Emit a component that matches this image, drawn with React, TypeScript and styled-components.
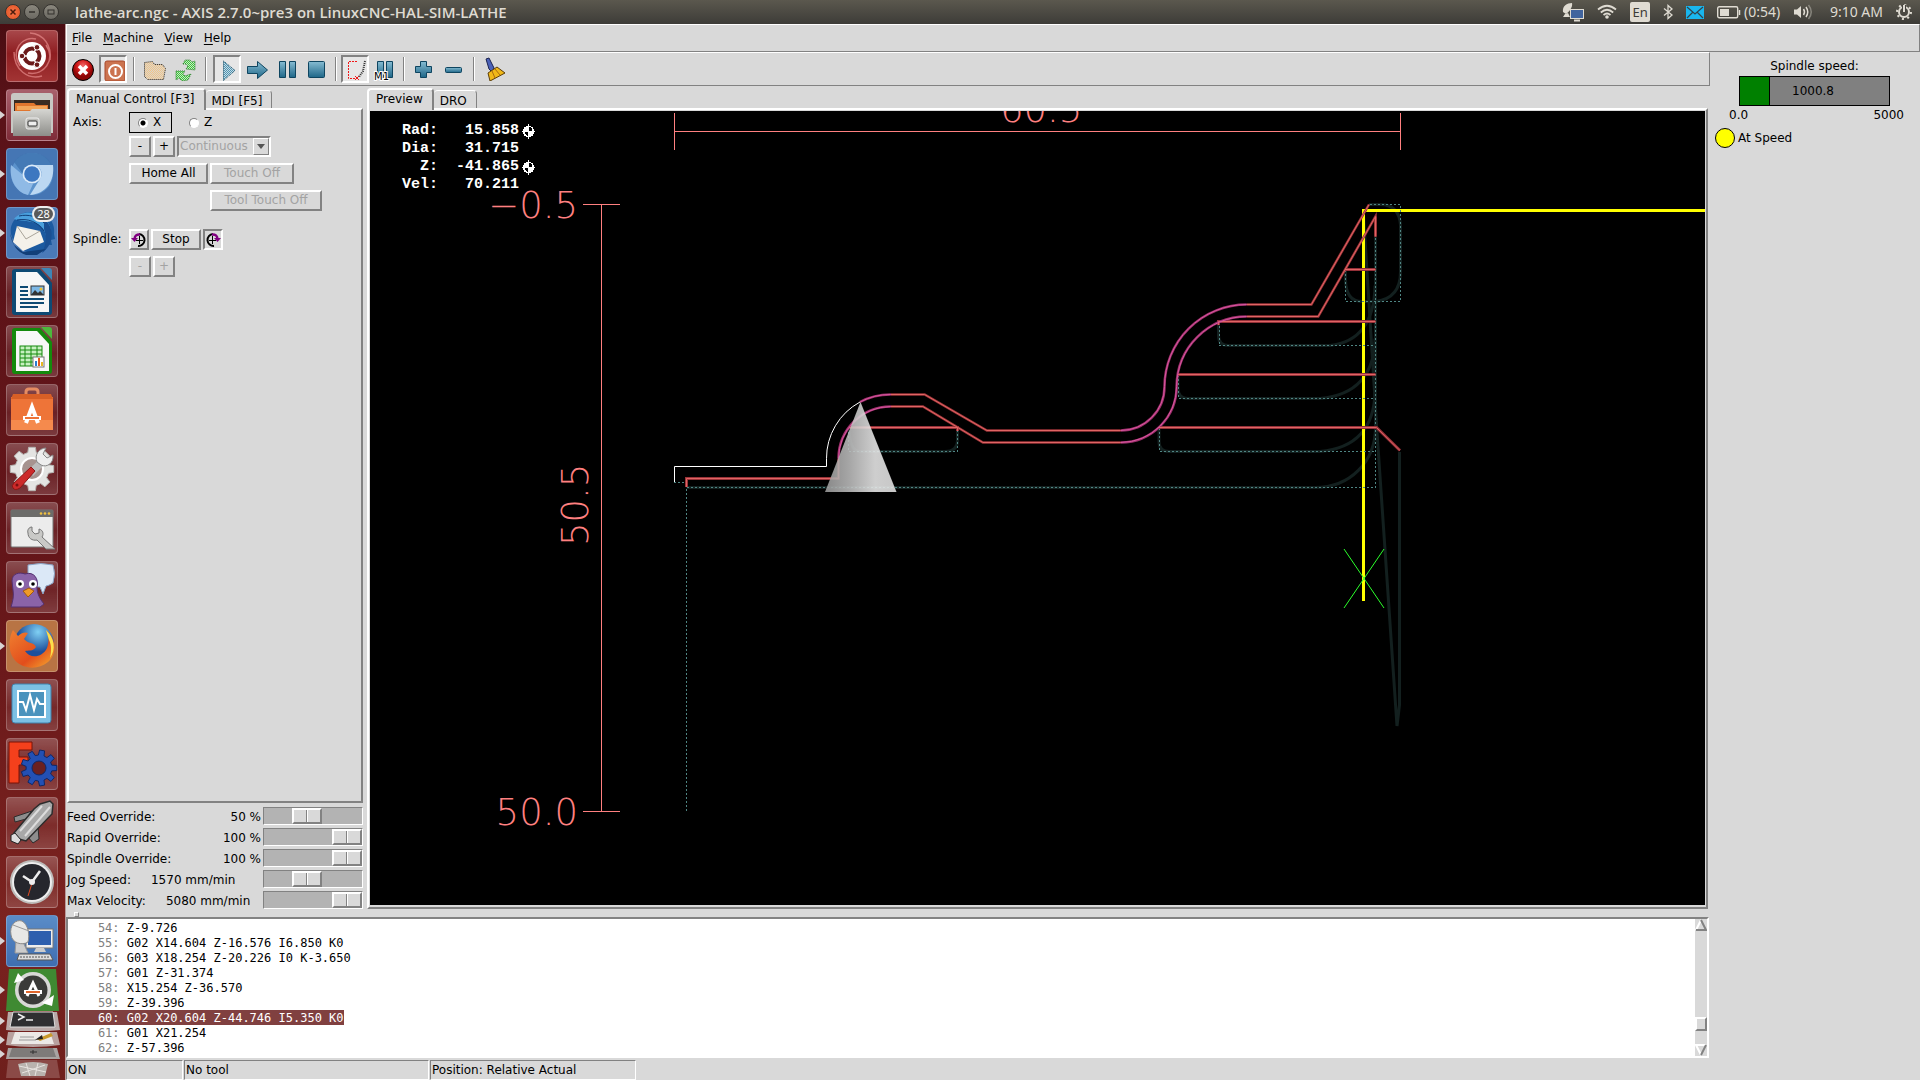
import React, { useState } from 'react';
import styled, { createGlobalStyle, css } from 'styled-components';

const GREY = '#d9d9d9';
const DARK = '#828282';
const UI_FONT = '"DejaVu Sans", Verdana, sans-serif';
const MONO_FONT = '"DejaVu Sans Mono", monospace';

const GlobalStyle = createGlobalStyle`
  *, *::before, *::after { box-sizing: border-box; }
  body { margin: 0; background: ${GREY}; color: #000; font: 12px/15px ${UI_FONT}; overflow: hidden; }
  button, input, select { font: inherit; color: inherit; margin: 0; padding: 0; }
  ul, ol { list-style: none; margin: 0; padding: 0; }
  svg { display: block; }
`;

const raised = css`
  border: 2px solid;
  border-color: #fff ${DARK} ${DARK} #fff;
`;
const sunken = css`
  border: 2px solid;
  border-color: ${DARK} #fff #fff ${DARK};
`;

/* ---------- desktop ---------- */

const Desktop = styled.div`
  display: flex;
  flex-direction: column;
  height: 100vh;
`;

const TopBar = styled.header`
  display: flex;
  align-items: center;
  flex: none;
  height: 24px;
  padding: 0 8px 0 5px;
  background: linear-gradient(#5b584e, #3d3c38);
  color: #dfdbd2;
  font: 14px/22px "Noto Sans", "Open Sans", sans-serif;
`;

const WindowButtons = styled.div`
  display: flex;
  gap: 3px;
  margin-right: 16px;
`;

const WindowButton = styled.button<{ $close?: boolean }>`
  width: 16px;
  height: 16px;
  border: 1px solid #35332f;
  border-radius: 50%;
  background: ${(p) => (p.$close ? 'radial-gradient(#f4764b, #e2501f)' : 'linear-gradient(#8a877d, #6b6962)')};
`;

const Title = styled.h1`
  flex: 1;
  margin: 0;
  font-family: "Open Sans", "Noto Sans", sans-serif;
  font-size: 15px;
  font-weight: 600;
`;

const Tray = styled.div`
  display: flex;
  align-items: center;
  gap: 13px;
`;

const TrayItem = styled.button`
  display: flex;
  align-items: center;
  gap: 3px;
  border: 0;
  background: none;
`;

const Language = styled.span`
  width: 20px;
  height: 20px;
  border-radius: 2px;
  background: #dfdbd2;
  color: #3c3b37;
  font-size: 13px;
  line-height: 20px;
  text-align: center;
`;

const Below = styled.div`
  display: flex;
  flex: 1;
  min-height: 0;
`;

/* ---------- launcher ---------- */

const Launcher = styled.nav`
  flex: none;
  width: 66px;
  overflow: hidden;
  padding-top: 6px;
  border-right: 1px solid #b89a9a;
  background: linear-gradient(#4a0d12, #5a1218 8%, #641519 50%, #7b231f 85%, #6e1f1c);
`;

const TileList = styled.ul`
  display: flex;
  flex-direction: column;
  gap: 7px;
`;

const FoldedList = styled.ul`
  padding-top: 2px;
`;

const TileSlot = styled.li<{ $running?: boolean }>`
  display: flex;
  align-items: center;
  &::before {
    content: '';
    width: 6px;
    border: 4px solid transparent;
    border-left: 5px solid ${(p) => (p.$running ? '#d8d4d4' : 'transparent')};
    border-right: 0;
    flex: none;
  }
`;

const Tile = styled.button<{ $tint?: string }>`
  position: relative;
  width: 52px;
  height: 52px;
  border: 1px solid rgba(255, 255, 255, 0.22);
  border-radius: 4px;
  background: ${(p) => p.$tint ?? 'linear-gradient(rgba(255,255,255,.24), rgba(255,255,255,.06) 55%, rgba(255,255,255,.16))'};
  svg { margin: -1px; }
`;

const Badge = styled.span`
  position: absolute;
  top: -2px;
  right: 2px;
  width: 23px;
  height: 16px;
  border: 2px solid #eee;
  border-radius: 8px;
  background: #5a5a5a;
  color: #fff;
  font: 11px/12px "Noto Sans", sans-serif;
  text-align: center;
`;

/* ---------- application window ---------- */

const Window = styled.main`
  display: flex;
  flex-direction: column;
  flex: 1;
  min-width: 0;
  background: ${GREY};
`;

const MenuBar = styled.nav`
  display: flex;
  align-items: center;
  flex: none;
  gap: 11px;
  height: 28px;
  padding: 0 5px;
  border: 1px solid;
  border-color: #fff ${DARK} ${DARK} #fff;
`;

const MenuButton = styled.button`
  border: 0;
  background: none;
  line-height: 16px;
  u { text-underline-offset: 2px; }
`;

const Columns = styled.div`
  display: flex;
  flex: 1;
  min-height: 0;
`;

const MainColumn = styled.div`
  display: flex;
  flex-direction: column;
  flex: 1;
  min-width: 0;
`;

const ToolBar = styled.div`
  display: flex;
  flex: none;
  gap: 2px;
  height: 34px;
  padding: 2px;
  border: 1px solid;
  border-color: #fff ${DARK} ${DARK} #fff;
`;

const ToolButton = styled.button<{ $on?: boolean }>`
  width: 28px;
  height: 28px;
  background: ${GREY};
  ${(p) => (p.$on ? sunken : 'border: 2px solid transparent;')}
  ${(p) => p.$on && 'background: #e6e6e6;'}
`;

const ToolGap = styled.span<{ $wide?: boolean }>`
  display: flex;
  justify-content: center;
  width: ${(p) => (p.$wide ? 10 : 6)}px;
  padding: 2px 0;
  &::before {
    content: '';
    width: 2px;
    border-left: 1px solid ${DARK};
    border-right: 1px solid #fff;
  }
`;

const WorkArea = styled.div`
  display: flex;
  flex: 1;
  min-height: 0;
  gap: 4px;
  padding: 2px 2px 0 1px;
`;

const LeftPane = styled.section`
  display: flex;
  flex-direction: column;
  flex: none;
  width: 296px;
`;

const Notebook = styled.section`
  display: flex;
  flex-direction: column;
  flex: 1;
  min-width: 0;
  min-height: 0;
`;

const Tabs = styled.div`
  display: flex;
  align-items: flex-end;
  height: 20px;
`;

const Tab = styled.button<{ $active?: boolean }>`
  height: ${(p) => (p.$active ? 22 : 18)}px;
  margin-bottom: ${(p) => (p.$active ? -2 : 0)}px;
  padding: ${(p) => (p.$active ? '0 9px 2px 7px' : '3px 9px 0 6px')};
  border: solid;
  border-width: ${(p) => (p.$active ? '2px 2px 0 2px' : '1px 1px 0 0')};
  border-color: #fff ${DARK} transparent #fff;
  border-radius: 4px 4px 0 0;
  background: ${GREY};
  line-height: 14px;
  white-space: nowrap;
  z-index: ${(p) => (p.$active ? 1 : 0)};
`;

const ManualPage = styled.div`
  display: flex;
  flex-direction: column;
  flex: 1;
  gap: 6px;
  padding: 2px 4px;
  ${raised}
`;

const ControlRow = styled.div<{ $spaced?: boolean; $tight?: boolean }>`
  display: grid;
  grid-template-columns: 56px 1fr;
  align-items: center;
  min-height: 21px;
  margin-top: ${(p) => (p.$spaced ? 12 : 0)}px;
  margin-bottom: ${(p) => (p.$tight ? -3 : 0)}px;
`;

const Controls = styled.div<{ $indent?: boolean }>`
  display: flex;
  align-items: center;
  gap: 2px;
  padding-left: ${(p) => (p.$indent ? 81 : 0)}px;
`;

const AxisChoice = styled.label<{ $focus?: boolean }>`
  display: flex;
  align-items: center;
  gap: 5px;
  width: 43px;
  height: 21px;
  margin-right: 6px;
  padding-left: 8px;
  border: 1px solid ${(p) => (p.$focus ? '#000' : 'transparent')};
`;

const Radio = styled.input`
  appearance: none;
  width: 10px;
  height: 10px;
  border: 1px solid;
  border-color: ${DARK} #fff #fff ${DARK};
  border-radius: 50%;
  background: #fff;
  &:checked { background: radial-gradient(#000 0 2px, #fff 3px); }
`;

const PushButton = styled.button<{ $w: number; $down?: boolean }>`
  display: flex;
  align-items: center;
  justify-content: center;
  width: ${(p) => p.$w}px;
  height: 21px;
  background: ${GREY};
  ${(p) => (p.$down ? sunken : raised)}
  &:disabled { color: #a3a3a3; }
`;

const Combo = styled.span`
  position: relative;
  width: 94px;
  height: 21px;
  ${sunken}
`;

const ComboSelect = styled.select`
  appearance: none;
  width: 100%;
  height: 17px;
  padding-left: 1px;
  border: 0;
  background: transparent;
  line-height: 15px;
  &:disabled { color: #a3a3a3; opacity: 1; }
`;

const ComboArrow = styled.span`
  position: absolute;
  top: 0;
  right: 0;
  width: 16px;
  height: 17px;
  padding: 5px 3px;
  border: 1px solid;
  border-color: #fff ${DARK} ${DARK} #fff;
  pointer-events: none;
`;

const Overrides = styled.div`
  display: flex;
  flex-direction: column;
  gap: 3px;
  padding-top: 4px;
`;

const OverrideRow = styled.div`
  display: flex;
  align-items: center;
  height: 18px;
  line-height: 16px;
`;

const OverrideLabel = styled.label`
  padding-top: 2px;
`;

const Amount = styled.output<{ $unit?: boolean }>`
  margin: ${(p) => (p.$unit ? '0 auto 0 20px' : '0 2px 0 auto')};
  padding-top: 2px;
`;

const Slider = styled.input`
  appearance: none;
  width: 100px;
  height: 18px;
  border: 1px solid;
  border-color: ${DARK} #fff #fff ${DARK};
  background: #b3b3b3;
  &::-webkit-slider-thumb {
    appearance: none;
    width: 30px;
    height: 16px;
    ${raised}
    background: linear-gradient(90deg, ${GREY} 12px, ${DARK} 12px 13px, #fff 13px 14px, ${GREY} 14px);
  }
`;

/* ---------- preview ---------- */

const Canvas = styled.div`
  position: relative;
  flex: 1;
  min-height: 0;
  padding: 1px 1px 2px;
  ${raised}
`;

const Plot = styled.svg`
  width: 100%;
  height: 100%;
  background: #000;
`;

const Readout = styled.div`
  position: absolute;
  top: 12px;
  left: 33px;
  color: #fff;
  font: bold 15px/18px "Liberation Mono", monospace;
  white-space: pre;
`;

const ReadoutLine = styled.div`
  display: flex;
  align-items: center;
  gap: 2px;
  height: 18px;
`;

/* ---------- program listing ---------- */

const Sash = styled.div`
  flex: none;
  height: 8px;
  padding: 3px 8px;
  &::before {
    content: '';
    display: block;
    width: 5px;
    height: 5px;
    border: 1px solid;
    border-color: #fff ${DARK} ${DARK} #fff;
  }
`;

const Program = styled.section`
  display: flex;
  flex: none;
  height: 141px;
  margin-right: 1px;
  background: #fff;
  ${sunken}
`;

const Listing = styled.ol`
  flex: 1;
  padding: 1px;
  font: 12px/15px ${MONO_FONT};
  white-space: pre;
`;

const CodeLine = styled.li<{ $current?: boolean }>`
  width: max-content;
  height: 15px;
  line-height: 16px;
  ${(p) => p.$current && 'background: #804040; color: #fff;'}
`;

const LineNo = styled.span<{ $current?: boolean }>`
  color: ${(p) => (p.$current ? '#fff' : '#808080')};
`;

const ScrollBar = styled.div`
  display: flex;
  flex-direction: column;
  width: 12px;
  background: ${GREY};
`;

const ScrollArrow = styled.button`
  height: 12px;
  border: 0;
  background: none;
`;

const Trough = styled.div`
  display: flex;
  flex-direction: column;
  justify-content: flex-end;
  flex: 1;
  padding-bottom: 13px;
`;

const ScrollThumb = styled.div`
  height: 14px;
  ${raised}
`;

const StatusBar = styled.footer`
  display: flex;
  flex: none;
  gap: 1px;
  height: 22px;
  padding-top: 2px;
`;

const StatusCell = styled.div<{ $w: number }>`
  width: ${(p) => p.$w}px;
  padding-left: 1px;
  line-height: 18px;
  border: 1px solid;
  border-color: ${DARK} #fff #fff ${DARK};
`;

/* ---------- side panel ---------- */

const SidePanel = styled.aside`
  display: flex;
  flex-direction: column;
  flex: none;
  width: 210px;
  padding-top: 6px;
`;

const SideLabel = styled.div`
  padding-right: 1px;
  line-height: 16px;
  text-align: center;
`;

const Gauge = styled.div`
  position: relative;
  height: 30px;
  margin: 2px 30px 0 29px;
  padding-right: 3px;
  border: 1px solid #000;
  background: #808080;
  line-height: 28px;
  text-align: center;
`;

const GaugeFill = styled.div`
  position: absolute;
  inset: 0 auto 0 0;
  border-right: 1px solid #000;
  background: #008000;
`;

const Scale = styled.div`
  display: flex;
  justify-content: space-between;
  padding: 2px 16px 0 19px;
`;

const Led = styled.div`
  display: flex;
  align-items: center;
  gap: 3px;
  margin: 5px 0 0 5px;
  &::before {
    content: '';
    width: 20px;
    height: 20px;
    border: 1px solid #000;
    border-radius: 50%;
    background: #ff0;
  }
`;

/* ---------- launcher art ---------- */

const Svg52 = ({ children }: { children: React.ReactNode }) => (
  <svg width="52" height="52" viewBox="0 0 52 52">{children}</svg>
);

const gearPath = (cx: number, cy: number, r: number, teeth: number, depth: number) => {
  const pts: string[] = [];
  for (let i = 0; i < teeth; i++) {
    const a = (i / teeth) * Math.PI * 2;
    const s = (Math.PI * 2) / teeth;
    [[-0.32, r - depth], [-0.2, r], [0.2, r], [0.32, r - depth]].forEach(([o, q]) => {
      pts.push(`${(cx + Math.cos(a + o * s) * q).toFixed(1)},${(cy + Math.sin(a + o * s) * q).toFixed(1)}`);
    });
  }
  return `M${pts.join('L')}Z`;
};

const Dash = () => (
  <Svg52>
    <g fill="none" stroke="#e58a8a" strokeWidth="1.5" opacity=".7">
      <path d="M14 36C4 20 16 6 30 9M40 15C50 30 38 46 22 43M24 3C38 4 46 16 44 30M8 22C8 40 22 50 36 46" />
    </g>
    <circle cx="26" cy="26" r="14" fill="#fff" />
    <circle cx="26" cy="26" r="7.5" fill="none" stroke="#6b1a1a" strokeWidth="4" />
    <g stroke="#fff" strokeWidth="1.5"><path d="M26 26L17 26M26 26L31 17M26 26L31 35" /></g>
    <circle cx="26" cy="26" r="5" fill="#fff" />
    <g fill="#6b1a1a" stroke="#fff"><circle cx="16" cy="26" r="2.8" /><circle cx="31" cy="17.3" r="2.8" /><circle cx="31" cy="34.7" r="2.8" /></g>
  </Svg52>
);

const Files = () => (
  <Svg52>
    <defs><linearGradient id="cab" x2="0" y2="1"><stop stopColor="#d6d6d2" /><stop offset="1" stopColor="#8d8d89" /></linearGradient></defs>
    <path d="M5 7Q5 4 8 4H44Q47 4 47 7V44H5Z" fill="#c8c8c4" />
    <rect x="8" y="11" width="36" height="14" fill="#3a2c22" />
    <path d="M9 14H28L30 16H42V25H9Z" fill="#e0762e" />
    <path d="M11 17H41V21H11Z" fill="#f2a65a" />
    <path d="M7 22H24L26 20H45V47H7Z" fill="url(#cab)" />
    <rect x="20" y="29" width="13" height="11" rx="2" fill="#bcbcb8" stroke="#efefef" />
    <rect x="22" y="32" width="9" height="5" rx="1" fill="#eee" stroke="#333" />
  </Svg52>
);

const Chromium = () => (
  <Svg52>
    <circle cx="26" cy="26" r="21" fill="#5b92cc" />
    <path d="M26 5A21 21 0 0 1 46 17H26A9 9 0 0 0 17 26L8 14A21 21 0 0 1 26 5Z" fill="#3f74b0" opacity=".8" />
    <path d="M5 17L17 27A10 10 0 0 0 27 36L22 47C9 44 3 30 5 17Z" fill="#8fbae6" />
    <path d="M28 17H47C49 33 40 46 24 47L34 31A9 9 0 0 0 28 17Z" fill="#bcd8f2" />
    <circle cx="26" cy="26" r="9.5" fill="#dcebf9" />
    <circle cx="26" cy="26" r="7.8" fill="#3d77c0" />
  </Svg52>
);

const Thunderbird = () => (
  <Svg52>
    <path d="M6 30C1 17 12 5 24 5C40 3 50 15 48 27L49 32L45 33L46 38L40 38L39 43C30 49 10 46 6 30Z" fill="#1c5aa0" />
    <path d="M8 12C14 4 30 3 38 11C46 17 47 30 41 38C41 24 36 17 26 15C18 13 12 14 8 12Z" fill="#4aa0dd" />
    <path d="M13 9C22 7 32 9 39 17M11 13C22 11 32 15 38 24" stroke="#123f78" fill="none" />
    <path d="M7 35L11 19L34 24L38 35L17 44Z" fill="#f4f1ea" />
    <path d="M11 19L20 32L34 24" stroke="#a9a49a" fill="none" />
    <path d="M38 12C49 20 48 38 36 46C40 38 41 30 38 22Z" fill="#1a4f92" />
    <path d="M4 26L8 38L17 45L40 42L31 48H20Q7 44 4 26Z" fill="#123f78" />
  </Svg52>
);

const Office = ({ dark, light, calc }: { dark: string; light: string; calc?: boolean }) => (
  <Svg52>
    <path d="M9 3H34L46 17V46Q46 49 43 49H9Q6 49 6 46V6Q6 3 9 3Z" fill={dark} />
    <path d="M35 2H43Q46 2 46 5V14Z" fill={light} />
    <path d="M10 6H31L43 19V46H10Z" fill="#f7f7f7" />
    {calc ? (
      <g>
        <rect x="14" y="21" width="22" height="20" fill="#c7f0c0" stroke={dark} />
        <path d="M14 25H36M14 29H36M14 33H36M14 37H36M19 21V41M25 21V41M31 21V41" stroke={dark} />
        <rect x="27" y="32" width="11" height="10" fill="#fff" stroke="#777" />
        <path d="M29 41V36H31V41Z" fill="#2b7bd0" /><path d="M32 41V33H34V41Z" fill="#e2571e" /><path d="M35 41V37H37V41Z" fill="#e8b820" />
      </g>
    ) : (
      <g>
        <path d="M14 21H22M14 25H22M14 29H22M14 33H38M14 37H38M14 41H32" stroke={dark} strokeWidth="2" />
        <rect x="25" y="20" width="13" height="9" fill="#7db8e6" stroke="#333" />
        <path d="M25 29L29 24L32 27L34 25L38 29Z" fill="#333" /><circle cx="35" cy="23" r="1.5" fill="#f4c430" />
      </g>
    )}
  </Svg52>
);

const Software = () => (
  <Svg52>
    <path d="M20 17V8Q20 5 23 5H29Q32 5 32 8V17" fill="none" stroke="#e58c62" strokeWidth="3" />
    <path d="M5 13H47V46H5Z" fill="#ee7438" />
    <path d="M5 36H47V46H5Z" fill="#f58a4d" />
    <path d="M7 10H45L47 15H5Z" fill="#d85f26" />
    <g fill="none" stroke="#fff" strokeWidth="4"><path d="M20 39L26 23L32 39" /></g>
    <path d="M17 32H35V36H17Z" fill="#fff" />
    <path d="M19 33H33V35H19Z" fill="#ee7438" />
  </Svg52>
);

const Settings = () => (
  <Svg52>
    <path d={gearPath(26, 26, 22, 8, 5)} fill="#e4e4e2" stroke="#b5b5b2" />
    <circle cx="26" cy="26" r="11" fill="#a6938f" stroke="#fff" strokeWidth="2" />
    <path d="M22 27L33 17L38 22L27 33Z" fill="#bbb" />
    <path d="M31 19C28 12 33 5 40 5L37 11L41 15L47 12C48 20 41 25 35 22Z" fill="#eee" stroke="#888" />
    <path d="M8 40L25 24L29 28L14 45Q9 48 7 45Q5 43 8 40Z" fill="#cc2a2a" stroke="#8c1616" />
    <circle cx="11" cy="42" r="1.5" fill="#7a1010" />
  </Svg52>
);

const Tweaks = () => (
  <Svg52>
    <rect x="5" y="8" width="42" height="37" rx="1" fill="#ececec" stroke="#777" />
    <path d="M5 8H47V15H5Z" fill="#6c6c6a" />
    <g fill="#f0c040"><circle cx="35" cy="11.5" r="1.3" /><circle cx="39" cy="11.5" r="1.3" /><circle cx="43" cy="11.5" r="1.3" /></g>
    <path d="M22 31C21 28 23 25 26 25V29L29 32L33 31V27C37 28 38 32 36 35L49 47H40L31 38C26 39 22 36 22 31Z" fill="#c9c9c7" stroke="#777" />
  </Svg52>
);

const Pidgin = () => (
  <Svg52>
    <path d="M22 4Q35 1 47 4Q50 12 47 22Q42 25 40 25L37 33L34 26Q26 26 22 24Z" fill="#dbe8f7" stroke="#8aa4c6" />
    <path d="M6 20C6 12 14 11 19 13C28 10 33 18 31 26C31 33 34 38 38 43L34 46H5C7 40 8 34 7 29Z" fill="#8a63a8" stroke="#533070" />
    <circle cx="14" cy="23" r="4" fill="#fff" /><circle cx="27" cy="23" r="4" fill="#fff" />
    <circle cx="14" cy="23" r="1.8" /><circle cx="27" cy="23" r="1.8" />
    <path d="M17 30L23 27L28 30L22 36Z" fill="#f09a28" stroke="#a35a10" />
  </Svg52>
);

const Firefox = () => (
  <Svg52>
    <defs>
      <radialGradient id="globe" cx=".6" cy=".2"><stop stopColor="#7fd0f4" /><stop offset="1" stopColor="#1d4f9c" /></radialGradient>
      <linearGradient id="fox" x2="1" y2="1"><stop stopColor="#f08030" /><stop offset=".6" stopColor="#e24e1c" /><stop offset="1" stopColor="#f8b030" /></linearGradient>
    </defs>
    <circle cx="28" cy="24" r="20" fill="url(#globe)" />
    <path d="M7 10L12 16C16 12 20 12 22 13L18 19C22 24 28 22 30 27C27 32 22 30 19 31C24 39 36 38 41 28C44 20 42 12 40 10C52 20 50 36 42 42C30 52 12 48 6 36C2 28 3 17 7 10Z" fill="url(#fox)" />
    <path d="M40 10C49 18 50 30 44 38C46 30 45 24 43 20Z" fill="#fbe04c" />
  </Svg52>
);

const Monitor = () => (
  <Svg52>
    <rect x="6" y="5" width="39" height="39" rx="3" fill="#7cc0e4" stroke="#3f83ad" />
    <rect x="12" y="12" width="27" height="26" fill="#4a93bd" stroke="#fff" strokeWidth="2" />
    <path d="M13 23H17L20 31L24 16L28 31L31 20L34 25H38" fill="none" stroke="#fff" strokeWidth="2" />
  </Svg52>
);

const FreeCad = () => (
  <Svg52>
    <path d="M3 4H26V12H13V19H22V27H13V45H3Z" fill="#f4401c" stroke="#7a1206" />
    <path d={gearPath(33, 30, 18, 9, 5)} fill="#2350b4" stroke="#0f2766" />
    <circle cx="33" cy="30" r="7" fill="#6b2020" stroke="#0f2766" />
  </Svg52>
);

const Mill = () => (
  <Svg52>
    <path d="M8 20L26 14L20 22L9 25ZM32 30L33 42L27 46L22 40Z" fill="#8d8d8d" stroke="#2c2c2c" />
    <path d="M34 7L44 4L47 7L46 17L20 44L13 42L8 36L28 12Z" fill="#a8a8a8" stroke="#2c2c2c" strokeWidth="1.5" />
    <path d="M36 9L14 34M44 10L19 39" stroke="#dcdcdc" strokeWidth="2" />
    <path d="M5 38L9 36L15 43L12 47L5 44Z" fill="#ddd" stroke="#222" />
  </Svg52>
);

const Clock = () => (
  <Svg52>
    <circle cx="26" cy="26" r="22" fill="#bdbdbb" />
    <circle cx="26" cy="26" r="20" fill="#eee" />
    <circle cx="26" cy="26" r="18" fill="#26272d" />
    <path d="M26 26L17 20M26 26L34 15" stroke="#eee" strokeWidth="2.5" />
    <path d="M27 24L22 40" stroke="#e04a20" />
    <circle cx="26" cy="26" r="3" fill="#eee" />
  </Svg52>
);

const Remote = () => (
  <Svg52>
    <rect x="20" y="14" width="27" height="19" fill="#eee" stroke="#777" />
    <rect x="22" y="16" width="23" height="14" fill="#2d5fae" />
    <path d="M30 33H38L40 37H28Z" fill="#ccc" />
    <path d="M10 26L9 38H22L17 27" stroke="#999" fill="#ccc" />
    <path d="M5 20C3 10 10 4 16 6C22 9 24 20 22 27C16 31 6 28 5 20Z" fill="#e8e8e6" stroke="#888" />
    <path d="M7 10L23 16" stroke="#999" fill="none" />
    <path d="M13 39H44L47 45H11Z" fill="#ddd" stroke="#555" /><path d="M14 42H44" stroke="#555" strokeDasharray="2 1" />
  </Svg52>
);

const launcherApps: { name: string; tint?: string; running?: boolean; badge?: string; art: React.ReactNode }[] = [
  { name: 'Dash', tint: 'linear-gradient(#a8474a, #8e1d20 45%, #a23434)', art: <Dash /> },
  { name: 'Files', tint: 'linear-gradient(#a8606c, #7e2b38)', running: true, art: <Files /> },
  { name: 'Chromium', tint: '#4576b4', running: true, art: <Chromium /> },
  { name: 'Thunderbird', tint: '#4a7ab8', running: true, badge: '28', art: <Thunderbird /> },
  { name: 'Writer', art: <Office dark="#0e4a74" light="#3e86b6" /> },
  { name: 'Calc', art: <Office dark="#148a0c" light="#4cb83c" calc /> },
  { name: 'Software', art: <Software /> },
  { name: 'Settings', art: <Settings /> },
  { name: 'Tweaks', art: <Tweaks /> },
  { name: 'Pidgin', art: <Pidgin /> },
  { name: 'Firefox', tint: '#b87444', running: true, art: <Firefox /> },
  { name: 'Monitor', art: <Monitor /> },
  { name: 'FreeCAD', art: <FreeCad /> },
  { name: 'Mill', art: <Mill /> },
  { name: 'Clock', art: <Clock /> },
  { name: 'Remote desktop', tint: 'linear-gradient(#5a8cc8, #3f6eb0)', running: true, art: <Remote /> },
];

const Folded = ({ h, children }: { h: number; children: React.ReactNode }) => (
  <svg width="54" height={h} viewBox={`0 0 54 ${h}`}>{children}</svg>
);

const foldedApps = [
  {
    name: 'Updater',
    art: (
      <Folded h={42}>
        <path d="M3 0H50L53 42H0Z" fill="#3f8a32" />
        <circle cx="27" cy="21" r="18" fill="#d8d8d6" /><circle cx="27" cy="21" r="14.5" fill="#3a3a38" />
        <g fill="none" stroke="#fff" strokeWidth="3"><path d="M21 27L27 14L33 27" /></g>
        <path d="M18 21H36V25H18Z" fill="#fff" /><path d="M20 22H34V24H20Z" fill="#e0662c" />
        <path d="M8 14L12 4L18 11ZM36 34L48 26L46 37Z" fill="#fff" />
      </Folded>
    ),
  },
  {
    name: 'Terminal',
    art: (
      <Folded h={20}>
        <path d="M2 1H51L54 19Q27 22 0 19Z" fill="#b9aaa8" />
        <path d="M7 1H47L49 16H4Z" fill="#2f2f31" stroke="#ddd" />
        <path d="M12 3L18 6L12 9M20 9H27" stroke="#eee" strokeWidth="1.5" fill="none" />
      </Folded>
    ),
  },
  {
    name: 'Notes',
    art: (
      <Folded h={17}>
        <path d="M2 1H51L54 14Q27 18 0 14Z" fill="#b8a19e" />
        <path d="M9 1H44L48 13H5Z" fill="#ece9e6" />
        <path d="M14 6H28M13 9H30" stroke="#9a9a9a" /><path d="M31 8L45 2L47 5L34 10Z" fill="#c99a2a" /><path d="M29 9L36 4L37 8Z" fill="#222" />
      </Folded>
    ),
  },
  {
    name: 'Drive',
    art: (
      <Folded h={12}>
        <path d="M2 0H51L54 11H0Z" fill="#a9a4a2" /><path d="M6 0H47L50 9H3Z" fill="#7e7b79" />
        <path d="M24 4H31M27 2V6" stroke="#333" />
      </Folded>
    ),
  },
  {
    name: 'Trash',
    art: (
      <Folded h={20}>
        <path d="M2 0H51L54 18H0Z" fill="#8b4a47" />
        <path d="M12 4Q27 0 42 4L39 16H15Z" fill="#b9b3ae" />
        <path d="M13 6L40 12M16 13L39 5M20 3L24 16M32 3L29 16" stroke="#e8e4e0" />
      </Folded>
    ),
  },
];

/* ---------- toolbar art ---------- */

const ToolSvg = ({ children }: { children: React.ReactNode }) => (
  <svg width="24" height="24" viewBox="2 2 24 24">{children}</svg>
);

const HiddenSvg = styled.svg`
  position: absolute;
`;

const Defs = () => (
  <HiddenSvg width="0" height="0" aria-hidden="true">
    <defs>
      <linearGradient id="blue" x2="0" y2="1"><stop stopColor="#86bcd2" /><stop offset="1" stopColor="#1e6688" /></linearGradient>
      <radialGradient id="red" cx=".5" cy=".3"><stop stopColor="#f26a6a" /><stop offset=".6" stopColor="#d01818" /><stop offset="1" stopColor="#8c0606" /></radialGradient>
      <pattern id="dotBlue" width="2" height="2" patternUnits="userSpaceOnUse"><path d="M0 0H2V2H0Z" fill="#c9dbe2" /><path d="M0 0H1V1H0ZM1 1H2V2H1Z" fill="#4a94b4" /></pattern>
      <pattern id="dotTan" width="2" height="2" patternUnits="userSpaceOnUse"><path d="M0 0H2V2H0Z" fill="#dcd6cc" /><path d="M0 0H1V1H0ZM1 1H2V2H1Z" fill="#f0c488" /></pattern>
      <pattern id="dotGreen" width="2" height="2" patternUnits="userSpaceOnUse"><path d="M0 0H2V2H0Z" fill="#c8e8c4" /><path d="M0 0H1V1H0ZM1 1H2V2H1Z" fill="#3cc43c" /></pattern>
      <linearGradient id="cone"><stop stopColor="#9a9a9a" /><stop offset=".35" stopColor="#bebebe" /><stop offset=".7" stopColor="#eaeaea" /><stop offset="1" stopColor="#e2e2e2" /></linearGradient>
    </defs>
  </HiddenSvg>
);

const EDGE = '#0e4560';

const toolGroups: { name: string; on?: boolean; art: React.ReactNode }[][] = [
  [
    { name: 'Emergency stop', art: <><circle cx="14" cy="15" r="10.5" fill="url(#red)" stroke="#000" /><path d="M10 11L18 19M18 11L10 19" stroke="#fff" strokeWidth="3.5" /></> },
    { name: 'Machine power', on: true, art: <><rect x="6" y="6" width="20" height="20" rx="2" fill="#cc7450" stroke="#a8482a" /><circle cx="16.5" cy="16.5" r="6.5" fill="none" stroke="#fff" strokeWidth="2" /><path d="M16.5 13V20" stroke="#fff" strokeWidth="2" /></> },
  ],
  [
    { name: 'Open', art: <path d="M3.5 7.5L11.5 6.5L13.5 9.5H21.5L24.5 13.5L22.5 24.5H6.5L3.5 21.5Z" fill="url(#dotTan)" stroke="#222" strokeDasharray="1 1" /> },
    { name: 'Reload', art: <path d="M12 9L14 5L19 5L21 7L24 6L24 15L15 14L17 11L15 9ZM5 16H14L12 19L14 21L20 19L17 25L11 26L8 23L5 25Z" fill="url(#dotGreen)" stroke="#2a7a2a" strokeDasharray="1 1" /> },
  ],
  [
    { name: 'Run', on: true, art: <path d="M10.5 6L22 15.5L10.5 25.5Z" fill="url(#dotBlue)" stroke={EDGE} strokeDasharray="1 1" /> },
    { name: 'Step', art: <path d="M4.5 11.5H14.5V6.5L24.5 15L14.5 23.5V18.5H4.5Z" fill="url(#blue)" stroke={EDGE} /> },
    { name: 'Pause', art: <path d="M6.5 6.5H12.5V22.5H6.5ZM16.5 6.5H22.5V22.5H16.5Z" fill="url(#blue)" stroke={EDGE} /> },
    { name: 'Stop', art: <rect x="5.5" y="6.5" width="16" height="16" rx="1" fill="url(#blue)" stroke={EDGE} /> },
  ],
  [
    { name: 'Skip lines', on: true, art: <><path d="M16 6.5H7.5V23.5H14" fill="none" stroke="#f01818" strokeDasharray="2 1" /><path d="M14 21L18 25M18 21L14 25" stroke="#f01818" /><path d="M24 6L22 16L18 22" fill="none" stroke="#333" strokeWidth="2" strokeDasharray="1 1" /></> },
    { name: 'Optional stop', art: <><path d="M6.5 6.5H12.5V22.5H6.5ZM15.5 6.5H21.5V22.5H15.5Z" fill="url(#blue)" stroke={EDGE} /><text x="3" y="25" fontSize="10" fontFamily="DejaVu Sans" stroke="#fff" strokeWidth="2" paintOrder="stroke">M1</text></> },
  ],
  [
    { name: 'Zoom in', art: <path d="M11.5 6.5H17.5V11.5H22.5V17.5H17.5V22.5H11.5V17.5H6.5V11.5H11.5Z" fill="url(#blue)" stroke={EDGE} /> },
    { name: 'Zoom out', art: <rect x="6.5" y="12.5" width="16" height="5" rx="1" fill="url(#blue)" stroke={EDGE} /> },
  ],
  [
    { name: 'Clear plot', art: <><path d="M5 4L8 3L13 13L11 17L8 14Z" fill="#4c62b8" stroke="#1c2450" /><path d="M7 18L16 12L24 18L9 26Z" fill="#f0b818" stroke="#5a3c08" /><path d="M11 16L14 23M14 14L19 20" stroke="#a86c10" /></> },
  ],
];

/* ---------- toolpath ---------- */

const HomeMark = () => (
  <svg width="15" height="15" viewBox="0 0 15 15" shapeRendering="crispEdges">
    <path d="M7 0H8V15H7ZM1 7H14V8H1Z" fill="#fff" />
    <ellipse cx="7.5" cy="7.5" rx="5.5" ry="6" fill="#fff" />
    <path d="M8 3H9L11 5V7H8ZM4 8H7V12H6L4 10Z" fill="#000" />
  </svg>
);

const cuts = [
  { x1: 1178, y: 374.5, drop: 398.5, bend: 1320 },
  { x1: 1159, y: 427.5, drop: 451.5, bend: 1320 },
  { x1: 1218.5, y: 321.5, drop: 345.5, bend: 1330 },
];

const outerRed = 'M890.8 394.5H924.6L986.9 430.5H1120.7M1246.7 304.5H1311.4L1369 204.5';
const innerRed = 'M686.5 487V478.5H838.5V458.7M890.8 406.5H922.9L982.9 442.5H1120.7M1246.7 316.5H1318.2L1375.5 216.5V236.5';
const straight = 'M849 427.5H957.5V431M1345 269.5H1375.5M1218.5 325V321.5H1375.5M1178 374.5H1375.5M1159 427.5H1376.5L1400 450.5';
const arcs =
  'M860 402A64.2 64.2 0 0 1 890.8 394.5M1120.7 430.5A43.8 43.8 0 0 0 1164.5 386.6A82.3 82.3 0 0 1 1246.7 304.5' +
  'M838.5 458.7A52.2 52.2 0 0 1 890.8 406.5M1120.7 442.5A55.9 55.9 0 0 0 1176.6 386.6A70.3 70.3 0 0 1 1246.7 316.5';
const rapids =
  'M674 482.5H684M686.5 811V487.5H1375.5V236.5M848.5 428V451.5H957.5V431M1345.5 270V301.5H1400.5V204.5H1369';
const blended =
  'M686.5 487.5H1315C1350 487.5 1375.5 462 1375.5 427V236M849 430Q850 451.5 860 451.5H945Q957.5 451.5 957.5 440V430' +
  'M1345.5 271V280Q1346 301.5 1362 301.5H1376Q1400.5 298 1400.5 272V225Q1399 204.5 1380 204.5H1369' +
  'M1363.5 215L1377 432L1397 726L1399.5 705V452';

const Toolpath = () => (
  <Plot viewBox="370 111 1335 794" preserveAspectRatio="xMinYMin slice" role="img" aria-label="Tool path preview">
    <g fill="none">
      <g stroke="#13201f" strokeWidth="3">
        <path d={blended} />
        {cuts.map((c) => (
          <path key={c.y} d={`M${c.x1} ${c.y}V${c.drop - 10}Q${c.x1} ${c.drop} ${c.x1 + 10} ${c.drop}H${c.bend}Q1374 ${c.drop - 5} 1375 ${c.drop - 60}`} />
        ))}
      </g>
      <path d="M1363.5 601V210.5H1705" stroke="#ff0" strokeWidth="3" />
      <g stroke="#4f8583" strokeDasharray="2 2" shapeRendering="crispEdges">
        <path d={rapids} />
        {cuts.map((c) => <path key={c.y} d={`M${c.x1 + 0.5} ${c.y}V${c.drop}H1375`} />)}
      </g>
      <g stroke="#943038" strokeWidth="3"><path d={straight} /><path d="M686.5 487V478.5H838.5" /><path d="M1375.5 216.5V236.5" /></g>
      <g stroke="#9c3438" strokeWidth="2.5"><path d={outerRed} /><path d={innerRed} /></g>
      <path d={arcs} stroke="#9c2e6a" strokeWidth="2.5" />
      <g stroke="#e06464"><path d={straight} /><path d={outerRed} /><path d={innerRed} /></g>
      <path d={arcs} stroke="#d858a0" />
      <path d="M674.5 482V466.5H826.5V458.7A64.2 64.2 0 0 1 860 402" stroke="#fff" />
      <path d="M1344 549L1384 608M1384 549L1344 608" stroke="#2bff2b" />
      <g stroke="#ff8080" shapeRendering="crispEdges">
        <path d="M674.5 113V150M1400.5 113V150M674.5 131.5H1400.5M601.5 204.5V811.5M583 204.5H620M583 811.5H620" />
      </g>
    </g>
    <path d="M860.5 402L896.5 492H825Z" fill="url(#cone)" opacity=".88" />
    <g fill="#ff8080" fontFamily="DejaVu Sans" fontWeight="200" fontSize="37">
      <text x="1000" y="122">60.5</text>
      <text x="578" y="218" textAnchor="end">−0.5</text>
      <text x="578" y="825" textAnchor="end">50.0</text>
      <text transform="translate(588 546) rotate(-90)">50.5</text>
    </g>
  </Plot>
);

const readings = [
  { text: 'Rad:   15.858', homed: true },
  { text: 'Dia:   31.715' },
  { text: '  Z:  -41.865', homed: true },
  { text: 'Vel:   70.211' },
];

const overrides = [
  { label: 'Feed Override:', amount: '50 %', pos: 41 },
  { label: 'Rapid Override:', amount: '100 %', pos: 100 },
  { label: 'Spindle Override:', amount: '100 %', pos: 100 },
  { label: 'Jog Speed:', amount: '1570 mm/min', pos: 41, unit: true },
  { label: 'Max Velocity:', amount: '5080 mm/min', pos: 100, unit: true },
];

const program: [number, string][] = [
  [54, 'Z-9.726'],
  [55, 'G02 X14.604 Z-16.576 I6.850 K0'],
  [56, 'G03 X18.254 Z-20.226 I0 K-3.650'],
  [57, 'G01 Z-31.374'],
  [58, 'X15.254 Z-36.570'],
  [59, 'Z-39.396'],
  [60, 'G02 X20.604 Z-44.746 I5.350 K0'],
  [61, 'G01 X21.254'],
  [62, 'Z-57.396'],
];
const currentLine = 60;

const menus = [['F', 'ile'], ['M', 'achine'], ['V', 'iew'], ['H', 'elp']];

const SpindleIcon = ({ flip }: { flip?: boolean }) => (
  <svg width="16" height="16" viewBox="0 0 16 16">
    <g transform={flip ? 'translate(16 0) scale(-1 1)' : undefined}>
      <path d="M8 2A6 6 0 1 1 7 14" fill="none" stroke="#000" strokeWidth="2" />
      <path d="M8.500 4V12M5 8.500H12" stroke="#000" />
      <path d="M9 2.5Q4 2 3.5 7" fill="none" stroke="#800080" strokeWidth="2.5" />
      <path d="M0 6H7L3.500 10Z" fill="#800080" />
    </g>
  </svg>
);

export default function App() {
  const [axis, setAxis] = useState('X');
  const [sliders, setSliders] = useState(overrides.map((o) => o.pos));

  return (
    <Desktop>
      <GlobalStyle />
      <Defs />
      <TopBar>
        <WindowButtons>
          <WindowButton $close aria-label="Close">
            <svg width="14" height="14" viewBox="0 0 14 14"><path d="M4.5 4.5L9.5 9.5M9.5 4.5L4.5 9.5" stroke="#4a1c0c" strokeWidth="1.5" /></svg>
          </WindowButton>
          <WindowButton aria-label="Minimize">
            <svg width="14" height="14" viewBox="0 0 14 14"><path d="M4 7H10" stroke="#33312d" strokeWidth="1.5" /></svg>
          </WindowButton>
          <WindowButton aria-label="Maximize">
            <svg width="14" height="14" viewBox="0 0 14 14"><rect x="4" y="5" width="6" height="4" fill="none" stroke="#33312d" /></svg>
          </WindowButton>
        </WindowButtons>
        <Title>lathe-arc.ngc - AXIS 2.7.0~pre3 on LinuxCNC-HAL-SIM-LATHE</Title>
        <Tray>
          <TrayItem aria-label="Remote desktop">
            <svg width="22" height="20" viewBox="0 0 22 20">
              <path d="M1 10C0 4 5 1 10 1C11 5 7 10 4 12Z" fill="#dfdbd2" /><path d="M3 12L1 15H8L6 11" fill="#dfdbd2" />
              <rect x="8.5" y="7.5" width="13" height="9" fill="#41649e" stroke="#dfdbd2" /><path d="M12 18.5H18" stroke="#dfdbd2" strokeWidth="2" />
            </svg>
          </TrayItem>
          <TrayItem aria-label="Network">
            <svg width="20" height="16" viewBox="0 0 20 16"><g fill="none" stroke="#dfdbd2" strokeWidth="1.7"><path d="M1 5.5Q10 -2 19 5.5M3.8 8.5Q10 3 16.2 8.5M6.5 11Q10 8 13.5 11" /></g><circle cx="10" cy="13" r="1.8" fill="#dfdbd2" /></svg>
          </TrayItem>
          <TrayItem aria-label="Keyboard layout"><Language>En</Language></TrayItem>
          <TrayItem aria-label="Bluetooth">
            <svg width="10" height="16" viewBox="0 0 10 16"><path d="M1 4.5L9 11L5 14.5V1.5L9 5L1 11.5" fill="none" stroke="#dfdbd2" strokeWidth="1.3" /></svg>
          </TrayItem>
          <TrayItem aria-label="Messages">
            <svg width="18" height="13" viewBox="0 0 18 13"><rect width="18" height="13" fill="#19b6ee" /><path d="M1 1L9 8L17 1M1 12L6.5 6.5M17 12L11.5 6.5" fill="none" stroke="#33424a" strokeWidth="1.2" /></svg>
          </TrayItem>
          <TrayItem aria-label="Battery, 0:54 left">
            <svg width="24" height="13" viewBox="0 0 24 13"><rect x=".7" y=".7" width="20" height="11" rx="1.5" fill="none" stroke="#dfdbd2" strokeWidth="1.4" /><rect x="3" y="3" width="9" height="7" fill="#dfdbd2" /><path d="M22.5 4V9" stroke="#dfdbd2" strokeWidth="1.5" /></svg>
            (0:54)
          </TrayItem>
          <TrayItem aria-label="Volume">
            <svg width="20" height="16" viewBox="0 0 20 16"><path d="M1 5.5H4L8 2V14L4 10.5H1Z" fill="#dfdbd2" /><g fill="none" stroke="#dfdbd2" strokeWidth="1.5"><path d="M10.5 5Q12.5 8 10.5 11M13 3Q16.5 8 13 13" /><path d="M15.5 1Q21 8 15.5 15" opacity=".4" /></g></svg>
          </TrayItem>
          <TrayItem>&nbsp;9:10 AM</TrayItem>
          <TrayItem aria-label="Session">
            <svg width="16" height="16" viewBox="0 0 16 16"><g fill="none" stroke="#dfdbd2"><circle cx="8" cy="8" r="5" strokeWidth="2" /><circle cx="8" cy="8" r="7" strokeWidth="2" strokeDasharray="2 3.5" /></g><path d="M8 1V8" stroke="#45433e" strokeWidth="4" /><path d="M8 1V8" stroke="#dfdbd2" strokeWidth="2" /></svg>
          </TrayItem>
        </Tray>
      </TopBar>

      <Below>
        <Launcher aria-label="Launcher">
          <TileList>
            {launcherApps.map((a) => (
              <TileSlot key={a.name} $running={a.running}>
                <Tile $tint={a.tint} aria-label={a.name}>
                  {a.art}
                  {a.badge && <Badge>{a.badge}</Badge>}
                </Tile>
              </TileSlot>
            ))}
          </TileList>
          <FoldedList>
            {foldedApps.map((a) => (
              <TileSlot key={a.name} $running={a.name !== 'Trash'} aria-label={a.name}>{a.art}</TileSlot>
            ))}
          </FoldedList>
        </Launcher>

        <Window>
          <MenuBar>
            {menus.map(([k, rest]) => (
              <MenuButton key={k}><u>{k}</u>{rest}</MenuButton>
            ))}
          </MenuBar>
          <Columns>
            <MainColumn>
              <ToolBar>
                {toolGroups.map((g, i) => (
                  <React.Fragment key={g[0].name}>
                    {i > 0 && <ToolGap $wide={i < 3 || i === 5} />}
                    {g.map((t) => (
                      <ToolButton key={t.name} $on={t.on} aria-label={t.name} aria-pressed={t.on}>
                        <ToolSvg>{t.art}</ToolSvg>
                      </ToolButton>
                    ))}
                  </React.Fragment>
                ))}
              </ToolBar>

              <WorkArea>
                <LeftPane>
                  <Notebook>
                    <Tabs>
                      <Tab $active>Manual Control [F3]</Tab>
                      <Tab>MDI [F5]</Tab>
                    </Tabs>
                    <ManualPage>
                      <ControlRow $tight>
                        <span>Axis:</span>
                        <Controls>
                          {['X', 'Z'].map((a) => (
                            <AxisChoice key={a} $focus={a === 'X'}>
                              <Radio type="radio" name="axis" checked={axis === a} onChange={() => setAxis(a)} />
                              {a}
                            </AxisChoice>
                          ))}
                        </Controls>
                      </ControlRow>
                      <ControlRow>
                        <span />
                        <Controls>
                          <PushButton $w={22}>-</PushButton>
                          <PushButton $w={22}>+</PushButton>
                          <Combo>
                            <ComboSelect disabled aria-label="Jog increment"><option>Continuous</option></ComboSelect>
                            <ComboArrow><svg width="8" height="5" viewBox="0 0 8 5"><path d="M0 0H8L4 5Z" fill="#555" /></svg></ComboArrow>
                          </Combo>
                        </Controls>
                      </ControlRow>
                      <ControlRow>
                        <span />
                        <Controls>
                          <PushButton $w={79}>Home All</PushButton>
                          <PushButton $w={84} disabled>Touch Off</PushButton>
                        </Controls>
                      </ControlRow>
                      <ControlRow>
                        <span />
                        <Controls $indent><PushButton $w={112} disabled>Tool Touch Off</PushButton></Controls>
                      </ControlRow>
                      <ControlRow $spaced>
                        <span>Spindle:</span>
                        <Controls>
                          <PushButton $w={20} aria-label="Spindle counterclockwise"><SpindleIcon /></PushButton>
                          <PushButton $w={50}>Stop</PushButton>
                          <PushButton $w={20} $down aria-label="Spindle clockwise"><SpindleIcon flip /></PushButton>
                        </Controls>
                      </ControlRow>
                      <ControlRow>
                        <span />
                        <Controls>
                          <PushButton $w={22} disabled>-</PushButton>
                          <PushButton $w={22} disabled>+</PushButton>
                        </Controls>
                      </ControlRow>
                    </ManualPage>
                  </Notebook>
                  <Overrides>
                    {overrides.map((o, i) => (
                      <OverrideRow key={o.label}>
                        <OverrideLabel htmlFor={`slider-${i}`}>{o.label}</OverrideLabel>
                        <Amount $unit={o.unit} htmlFor={`slider-${i}`}>{o.amount}</Amount>
                        <Slider
                          id={`slider-${i}`}
                          type="range"
                          value={sliders[i]}
                          onChange={(e) => setSliders(sliders.map((s, j) => (j === i ? +e.target.value : s)))}
                        />
                      </OverrideRow>
                    ))}
                  </Overrides>
                </LeftPane>

                <Notebook>
                  <Tabs>
                    <Tab $active>Preview</Tab>
                    <Tab>DRO</Tab>
                  </Tabs>
                  <Canvas>
                    <Toolpath />
                    <Readout>
                      {readings.map((r) => (
                        <ReadoutLine key={r.text}>{r.text}{r.homed && <HomeMark />}</ReadoutLine>
                      ))}
                    </Readout>
                  </Canvas>
                </Notebook>
              </WorkArea>

              <Sash />
              <Program>
                <Listing>
                  {program.map(([n, code]) => (
                    <CodeLine key={n} $current={n === currentLine}>
                      <LineNo $current={n === currentLine}>{`    ${n}: `}</LineNo>{code}
                    </CodeLine>
                  ))}
                </Listing>
                <ScrollBar>
                  <ScrollArrow aria-label="Scroll up">
                    <svg width="12" height="12" viewBox="0 0 12 12"><path d="M6 1L1 11" stroke="#fff" strokeWidth="2" /><path d="M6 1L11 11H1" fill="none" stroke={DARK} strokeWidth="2" /></svg>
                  </ScrollArrow>
                  <Trough><ScrollThumb /></Trough>
                  <ScrollArrow aria-label="Scroll down">
                    <svg width="12" height="12" viewBox="0 0 12 12"><path d="M11 1H1L6 11" fill="none" stroke="#fff" strokeWidth="2" /><path d="M11 1L6 11" stroke={DARK} strokeWidth="2" /></svg>
                  </ScrollArrow>
                </ScrollBar>
              </Program>
              <StatusBar>
                <StatusCell $w={117}>ON</StatusCell>
                <StatusCell $w={245}>No tool</StatusCell>
                <StatusCell $w={206}>Position: Relative Actual</StatusCell>
              </StatusBar>
            </MainColumn>

            <SidePanel>
              <SideLabel>Spindle speed:</SideLabel>
              <Gauge>
                <GaugeFill style={{ width: `${(1000.8 / 5000) * 100}%` }} />
                1000.8
              </Gauge>
              <Scale><span>0.0</span><span>5000</span></Scale>
              <Led>At Speed</Led>
            </SidePanel>
          </Columns>
        </Window>
      </Below>
    </Desktop>
  );
}
